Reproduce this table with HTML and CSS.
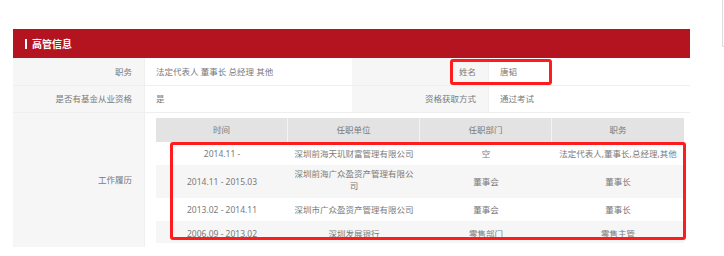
FILE: index.html
```html
<!DOCTYPE html>
<html lang="zh-CN">
<head>
<meta charset="utf-8">
<title>高管信息</title>
<link rel="stylesheet" href="styles.css">
</head>
<body>
<div class="page">
  <div class="edge"></div>
  <section class="panel">
    <div class="panel-head"><span class="bar"></span><span class="title">高管信息</span></div>
    <div class="info">
      <div class="lbl">职务</div>
      <div class="val">法定代表人 董事长 总经理 其他</div>
      <div class="lbl">姓名</div>
      <div class="val">唐韬</div>

      <div class="lbl">是否有基金从业资格</div>
      <div class="val">是</div>
      <div class="lbl">资格获取方式</div>
      <div class="val">通过考试</div>

      <div class="lbl tall">工作履历</div>
      <div class="val wide">
        <div class="hist">
          <div class="th">时间</div>
          <div class="th">任职单位</div>
          <div class="th">任职部门</div>
          <div class="th">职务</div>

          <div class="td r1">2014.11 -</div>
          <div class="td r1">深圳前海天玑财富管理有限公司</div>
          <div class="td r1">空</div>
          <div class="td r1">法定代表人,董事长,总经理,其他</div>

          <div class="td r2 alt">2014.11 - 2015.03</div>
          <div class="td r2 alt top">深圳前海广众盈资产管理有限公司</div>
          <div class="td r2 alt">董事会</div>
          <div class="td r2 alt">董事长</div>

          <div class="td r3">2013.02 - 2014.11</div>
          <div class="td r3">深圳市广众盈资产管理有限公司</div>
          <div class="td r3">董事会</div>
          <div class="td r3">董事长</div>

          <div class="td r4 alt last">2006.09 - 2013.02</div>
          <div class="td r4 alt last">深圳发展银行</div>
          <div class="td r4 alt last">零售部门</div>
          <div class="td r4 alt last">零售主管</div>
        </div>
      </div>
    </div>
  </section>
  <div class="mark mark-name"></div>
  <div class="mark mark-hist"></div>
</div>
</body>
</html>
```

FILE: styles.css
```css
html, body {
  margin: 0;
  padding: 0;
  background: #ffffff;
}
body {
  font-family: "Noto Sans", "Noto Sans CJK SC", sans-serif;
  color: #7a7a7a;
  font-size: 8.5px;
  line-height: 12px;
}
.page {
  position: relative;
  width: 724px;
  height: 256px;
  overflow: hidden;
  padding-top: 29px;
  box-sizing: border-box;
}
.edge {
  position: absolute;
  left: 722px;
  top: 0;
  width: 6px;
  height: 46px;
  border-left: 1px solid #dcdcdc;
  border-bottom: 1px solid #dcdcdc;
}
.panel {
  margin-left: 13px;
  width: 677px;
}
.panel-head {
  height: 29px;
  background: #b3141f;
  display: flex;
  align-items: center;
  padding-left: 12px;
  gap: 5px;
}
.bar {
  width: 2px;
  height: 10px;
  background: #ffffff;
}
.title {
  color: #ffffff;
  font-weight: bold;
  font-size: 10px;
  font-family: "Noto Sans CJK SC", sans-serif;
}
.info {
  display: grid;
  grid-template-columns: 132px 207px 137px 201px;
  grid-template-rows: 28px 27px 134px;
}
.lbl, .val {
  display: flex;
  align-items: center;
  border-bottom: 1px solid #efefef;
  box-sizing: border-box;
}
.lbl {
  background: #f6f6f6;
  justify-content: flex-end;
  padding-right: 12px;
  border-right: 1px solid #f0f0f0;
}
.val {
  background: #ffffff;
  padding-left: 11px;
}
.wide {
  grid-column: 2 / 5;
  align-items: flex-start;
  padding: 5px 6px 4px 11px;
  border-bottom: none;
}
.tall {
  border-bottom: none;
}
.hist {
  width: 528px;
  display: grid;
  grid-template-columns: repeat(4, 132px);
  grid-template-rows: 24px 23px 33px 23px 22px;
  overflow: hidden;
}
.th, .td {
  display: flex;
  align-items: center;
  justify-content: center;
  text-align: center;
  padding: 0 6px;
  box-sizing: border-box;
}
.th {
  background: #e3e3e3;
  border-right: 1px solid #f4f4f4;
}
.th:nth-child(4) {
  border-right: none;
}
.td {
  background: #ffffff;
}
.td.alt {
  background: #f6f6f6;
}
.td.top {
  align-items: flex-start;
  padding-top: 3px;
}
.td.last {
  padding-top: 3px;
}
.mark {
  position: absolute;
  border: 3px solid #ff1c1c;
  border-radius: 3px;
  box-sizing: border-box;
}
.mark-name {
  left: 450px;
  top: 59px;
  width: 102px;
  height: 26px;
}
.mark-hist {
  left: 170px;
  top: 142px;
  width: 516px;
  height: 98px;
}
```
